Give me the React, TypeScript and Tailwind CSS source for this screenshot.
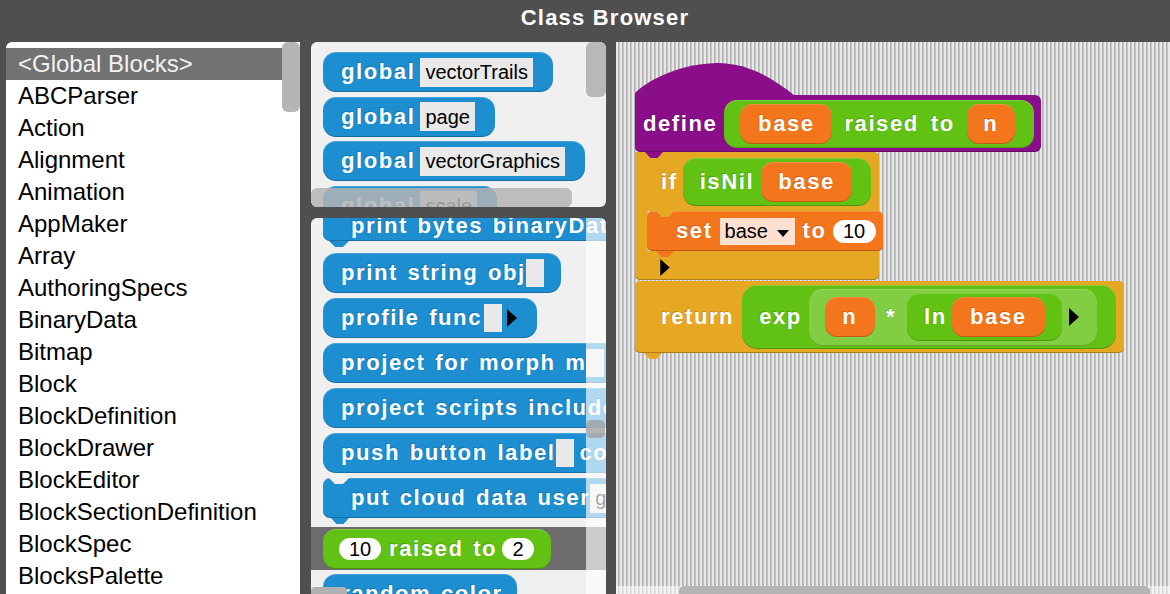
import React from "react";

const lbl =
  "whitespace-nowrap text-[22px] font-bold leading-none tracking-[1.6px] [word-spacing:2px] text-white [text-shadow:-1px_-1px_0_rgba(0,0,0,0.18)]";
const bevel =
  "shadow-[inset_0_-1px_0_rgba(0,0,0,0.22),inset_0_1px_0_rgba(255,255,255,0.18)]";
const notch = "[clip-path:polygon(0_0,100%_0,70%_100%,30%_100%)]";

const classList = [
  "<Global Blocks>",
  "ABCParser",
  "Action",
  "Alignment",
  "Animation",
  "AppMaker",
  "Array",
  "AuthoringSpecs",
  "BinaryData",
  "Bitmap",
  "Block",
  "BlockDefinition",
  "BlockDrawer",
  "BlockEditor",
  "BlockSectionDefinition",
  "BlockSpec",
  "BlocksPalette",
];

function Arrow({ className = "" }: { className?: string }) {
  return (
    <svg width="10" height="18" viewBox="0 0 10 18" className={`shrink-0 ${className}`}>
      <path d="M0 0 L10 9 L0 18 Z" fill="#000" />
    </svg>
  );
}

function Slot({ children, className = "" }: { children?: React.ReactNode; className?: string }) {
  return (
    <div
      className={`flex h-[29px] shrink-0 items-center bg-[#e9e9e9] px-[5px] text-[20px] font-normal leading-none text-black ${className}`}
    >
      {children}
    </div>
  );
}

function EmptySlot({ className = "" }: { className?: string }) {
  return <div className={`h-[28px] w-[18px] shrink-0 bg-[#e9e9e9] ${className}`} />;
}

function Blue({ children, className = "" }: { children: React.ReactNode; className?: string }) {
  return (
    <div
      className={`ml-[12px] flex h-[40px] w-max shrink-0 items-center rounded-[13px] bg-[#1d8fd0] ${bevel} ${className}`}
    >
      {children}
    </div>
  );
}

function Orange({ children, className = "" }: { children: React.ReactNode; className?: string }) {
  return (
    <div
      className={`flex h-[40px] shrink-0 items-center justify-center rounded-[12px] bg-[#f3761d] ${bevel} ${className}`}
    >
      <span className={lbl}>{children}</span>
    </div>
  );
}

function ClassList() {
  return (
    <div className="relative w-[294px] shrink-0 overflow-hidden rounded-tl-[6px] bg-white pt-[6px]">
      {classList.map((c, i) => (
        <div
          key={c}
          className={
            i === 0
              ? "mr-[18px] h-[32px] whitespace-nowrap bg-[#727272] pl-[12px] text-[24px] leading-[32px] text-[#f2f2f2]"
              : "h-[32px] whitespace-nowrap pl-[12px] text-[24px] leading-[32px] text-black"
          }
        >
          {c}
        </div>
      ))}
      <div className="absolute right-0 top-0 h-[70px] w-[18px] rounded-[6px] bg-[#b5b5b5]" />
    </div>
  );
}

function GlobalsPane() {
  const globals = ["vectorTrails", "page", "vectorGraphics", "scale"];
  return (
    <div className="relative flex h-[165px] shrink-0 flex-col gap-[4.5px] overflow-hidden rounded-[6px] bg-[#f0f0f0] pt-[10px]">
      {globals.map((g) => (
        <Blue key={g} className="pl-[18px] pr-[20px]">
          <span className={lbl}>global</span>
          <Slot className="ml-[5px]">{g}</Slot>
        </Blue>
      ))}
      <div className="absolute right-0 top-0 h-[55px] w-[20px] rounded-[6px] bg-[#b8b8b8]" />
      <div className="absolute bottom-0 left-0 h-[19px] w-[261px] rounded-[6px] bg-[#b4b4b4]/85" />
    </div>
  );
}

function BlocksPane() {
  return (
    <div className="relative flex min-h-0 flex-1 flex-col items-start overflow-hidden rounded-t-[6px] bg-[#f0f0f0]">
      {/* print bytes (command, scrolled partly out) */}
      <div
        className={`relative ml-[12px] mt-[-17px] flex h-[40px] w-max shrink-0 items-center rounded-[7px] bg-[#1d8fd0] pl-[28px] pr-[20px] pt-[10px] ${bevel}`}
      >
        <span className={lbl}>print bytes binaryData</span>
        <EmptySlot className="ml-[4px]" />
        <div className={`absolute left-[6px] top-full z-10 h-[6px] w-[20px] bg-[#1d8fd0] ${notch}`} />
      </div>

      <Blue className="mt-[12px] pl-[18px] pr-[17px]">
        <span className={lbl}>print string obj</span>
        <EmptySlot />
      </Blue>

      <Blue className="mt-[5px] pl-[18px] pr-[20px]">
        <span className={lbl}>profile func</span>
        <EmptySlot className="ml-[2px]" />
        <Arrow className="ml-[5px]" />
      </Blue>

      <Blue className="mt-[5px] pl-[18px] pr-[20px]">
        <span className={lbl}>project for morph m</span>
        <EmptySlot />
        <span className={`${lbl} ml-[6px]`}>d</span>
      </Blue>

      <Blue className="mt-[5px] pl-[18px] pr-[20px]">
        <span className={lbl}>project scripts include</span>
      </Blue>

      <Blue className="mt-[5px] pl-[18px] pr-[20px]">
        <span className={lbl}>push button label</span>
        <EmptySlot />
        <span className={`${lbl} ml-[6px]`}>color</span>
      </Blue>

      {/* put cloud data (command) */}
      <div
        className={`relative ml-[12px] mt-[5px] flex h-[40px] w-max shrink-0 items-center rounded-[7px] bg-[#1d8fd0] pl-[28px] pr-[20px] ${bevel}`}
      >
        <div className={`absolute left-[6px] top-0 h-[6px] w-[20px] bg-[#f0f0f0] ${notch}`} />
        <span className={lbl}>put cloud data user</span>
        <Slot className="ml-[0px] text-[#a0a0a0]">guest</Slot>
        <div className={`absolute left-[8px] top-full z-10 h-[6px] w-[18px] bg-[#1d8fd0] ${notch}`} />
      </div>

      {/* selected entry */}
      <div className="mt-[9px] flex h-[43px] w-full shrink-0 items-start bg-[#6c6c6c] pl-[12px] pt-[2px]">
        <div
          className={`flex h-[40px] w-max shrink-0 items-center rounded-[13px] bg-[#62c213] pl-[16px] pr-[17px] ${bevel}`}
        >
          <div className="flex h-[22px] w-[42px] items-center justify-center rounded-full bg-white text-[20px] leading-none text-black">
            10
          </div>
          <span className={`${lbl} ml-[8px]`}>raised to</span>
          <div className="ml-[5px] flex h-[22px] w-[32px] items-center justify-center rounded-full bg-white text-[20px] leading-none text-black">
            2
          </div>
        </div>
      </div>

      <Blue className="mt-[4px] pl-[18px] pr-[14px]">
        <span className={lbl}>random color</span>
      </Blue>

      {/* vertical scroll strip and thumbs */}
      <div className="absolute bottom-0 right-0 top-0 z-20 w-[20px] bg-white/65" />
      <div className="absolute right-[1px] top-[202px] z-30 h-[18px] w-[19px] rounded-[5px] bg-[#9c9c9c]/75" />
      <div className="absolute bottom-0 left-0 z-30 h-[7px] w-[36px] rounded-t-[4px] bg-[#b0b0b0]" />
    </div>
  );
}

function DefineBlock() {
  return (
    <div className="relative flex h-[57px] w-[406px] shrink-0 items-center rounded-r-[6px] rounded-bl-[5px] bg-[#8a0d8a] pl-[8px] shadow-[inset_0_-1px_0_rgba(0,0,0,0.25)]">
      <svg
        className="absolute left-0 top-[-33px]"
        width="161"
        height="34"
        viewBox="0 0 161 34"
      >
        <path d="M0 34 L0 31 C8 22 40 2 82 1 C115 1 140 18 160 34 Z" fill="#8a0d8a" />
      </svg>
      <span className={lbl}>define</span>
      <div
        className={`ml-[7px] flex h-[48px] shrink-0 items-center rounded-[13px] bg-[#62c213] pl-[16px] pr-[19px] ${bevel}`}
      >
        <Orange className="w-[92px]">base</Orange>
        <span className={`${lbl} ml-[12px]`}>raised</span>
        <span className={`${lbl} ml-[12px]`}>to</span>
        <Orange className="ml-[12px] w-[48px]">n</Orange>
      </div>
      <div className={`absolute left-[10px] top-full z-10 h-[6px] w-[18px] bg-[#8a0d8a] ${notch}`} />
    </div>
  );
}

function IfBlock() {
  return (
    <div className="relative flex shrink-0 flex-col">
      <div className="relative flex h-[59px] w-[244px] items-center rounded-tr-[5px] bg-[#e6a822] pl-[26px]">
        <span className={lbl}>if</span>
        <div
          className={`ml-[5px] flex h-[48px] shrink-0 items-center rounded-[13px] bg-[#62c213] pl-[17px] pr-[19px] ${bevel}`}
        >
          <span className={lbl}>isNil</span>
          <Orange className="ml-[7px] w-[91px]">base</Orange>
        </div>
      </div>
      <div className="flex">
        <div className="w-[12px] shrink-0 bg-[#e6a822]" />
        <div
          className={`relative flex h-[40px] w-[236px] shrink-0 items-center rounded-[5px] bg-[#f3761d] pl-[29px] ${bevel}`}
        >
          <div className={`absolute left-[9px] top-0 h-[6px] w-[18px] bg-[#e6a822] ${notch}`} />
          <span className={lbl}>set</span>
          <div className="ml-[7px] flex h-[27px] w-[75px] shrink-0 items-center bg-[#fde0cf] pl-[5px] text-[20px] leading-none text-black">
            base
            <svg width="12" height="7" viewBox="0 0 12 7" className="ml-[9px] mt-[4px]">
              <path d="M0 0 H12 L6 7 Z" fill="#000" />
            </svg>
          </div>
          <span className={`${lbl} ml-[8px]`}>to</span>
          <div className="ml-[6px] flex h-[23px] w-[43px] shrink-0 items-center justify-center rounded-full bg-white text-[20px] leading-none text-black">
            10
          </div>
          <div className={`absolute left-[9px] top-full z-10 h-[6px] w-[18px] bg-[#f3761d] ${notch}`} />
        </div>
      </div>
      <div className="flex h-[29px] w-[244px] items-center rounded-b-[5px] bg-[#e6a822] pl-[25px] pt-[3px] shadow-[inset_0_-1px_0_rgba(0,0,0,0.25)]">
        <Arrow className="h-[17px]" />
      </div>
    </div>
  );
}

function ReturnBlock() {
  return (
    <div className="relative flex h-[72px] w-[489px] shrink-0 items-center rounded-[5px] bg-[#e6a822] pl-[26px] shadow-[inset_0_-1px_0_rgba(0,0,0,0.25)]">
      <span className={lbl}>return</span>
      <div
        className={`ml-[8px] flex h-[64px] shrink-0 items-center rounded-[15px] bg-[#62c213] pl-[17px] pr-[19px] ${bevel}`}
      >
        <span className={lbl}>exp</span>
        <div
          className={`ml-[7px] flex h-[57px] shrink-0 items-center rounded-[14px] bg-[#81ce42] pl-[16px] pr-[18px] ${bevel}`}
        >
          <Orange className="w-[50px]">n</Orange>
          <span className={`${lbl} ml-[11px]`}>*</span>
          <div
            className={`ml-[11px] flex h-[48px] shrink-0 items-center rounded-[13px] bg-[#62c213] pl-[17px] pr-[17px] ${bevel}`}
          >
            <span className={lbl}>ln</span>
            <Orange className="ml-[5px] h-[39px] w-[93px]">base</Orange>
          </div>
          <Arrow className="ml-[7px]" />
        </div>
      </div>
      <div className={`absolute left-[9px] top-full z-10 h-[6px] w-[18px] bg-[#e6a822] ${notch}`} />
    </div>
  );
}

function Canvas() {
  return (
    <div className="relative ml-[10px] min-w-0 flex-1 overflow-hidden [background-image:repeating-linear-gradient(90deg,#e8e8e8_0px,#e8e8e8_2px,#b2b2b2_2px,#b2b2b2_3px,#c3c3c3_3px,#c3c3c3_4px)]">
      <div className="absolute left-[19px] top-[53px] flex flex-col items-start">
        <DefineBlock />
        <IfBlock />
        <div className="mt-[1px]">
          <ReturnBlock />
        </div>
      </div>
      <div className="absolute bottom-0 left-0 right-0 h-[8px] bg-white/50" />
      <div className="absolute bottom-0 left-[63px] h-[8px] w-[471px] rounded-t-[5px] bg-[#b4b4b4]" />
    </div>
  );
}

export default function App() {
  return (
    <div className="flex h-[594px] w-[1170px] flex-col overflow-hidden bg-[#4f4f4f] font-['Liberation_Sans',Arial,sans-serif]">
      <div className="flex h-[42px] shrink-0 items-center justify-center pb-[6px] pl-[40px]">
        <span className="text-[22px] font-bold leading-none tracking-[1.2px] text-white">
          Class Browser
        </span>
      </div>
      <div className="flex min-h-0 flex-1 pl-[6px]">
        <ClassList />
        <div className="ml-[11px] flex w-[295px] shrink-0 flex-col gap-[11px]">
          <GlobalsPane />
          <BlocksPane />
        </div>
        <Canvas />
      </div>
    </div>
  );
}
